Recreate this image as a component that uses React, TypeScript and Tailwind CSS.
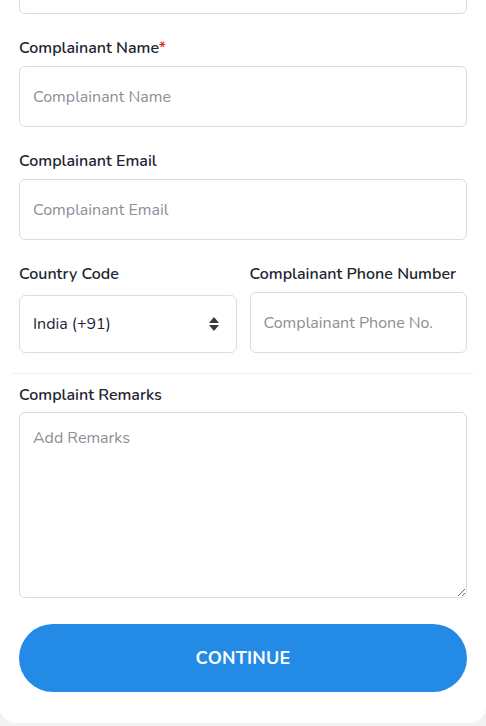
const font = { fontFamily: '"Nunito", "Open Sans", "Noto Sans", sans-serif' };

function Label({ children, required }: { children: React.ReactNode; required?: boolean }) {
  return (
    <label className="block text-[16px] font-semibold leading-5 text-[#1e2432]">
      {children}
      {required ? <span className="text-[#e0262f]">*</span> : null}
    </label>
  );
}

function TextInput({ placeholder }: { placeholder: string }) {
  return (
    <input
      placeholder={placeholder}
      className="h-[61px] w-full rounded-md border border-[#dcdcdc] bg-white px-[13px] text-[16px] text-[#1e2432] outline-none placeholder:text-[#8c8f96]"
      style={font}
    />
  );
}

export default function App() {
  return (
    <div className="h-[726px] overflow-hidden bg-[#f2f2f2]" style={font}>
      <div className="h-[723px] overflow-hidden rounded-b-2xl bg-white">
        <div className="-mt-[47px] px-[19px]">
          <TextInput placeholder="" />

          <div className="mt-[24px]">
            <Label required>Complainant Name</Label>
            <div className="mt-[8px]">
              <TextInput placeholder="Complainant Name" />
            </div>
          </div>

          <div className="mt-[24px]">
            <Label>Complainant Email</Label>
            <div className="mt-[8px]">
              <TextInput placeholder="Complainant Email" />
            </div>
          </div>

          <div className="mt-[24px] grid grid-cols-2 gap-[13px]">
            <div>
              <Label>Country Code</Label>
              <div className="mt-[11px] flex h-[58px] items-center justify-between rounded-md border border-[#dcdcdc] pl-[13px] pr-[17px]">
                <span className="text-[16px] text-[#1e2432]">India (+91)</span>
                <span className="flex flex-col items-center">
                  <svg width="10" height="6" viewBox="0 0 10 6">
                    <path d="M5 0 L10 6 L0 6 Z" fill="#3a3a3a" />
                  </svg>
                  <svg width="10" height="6" viewBox="0 0 10 6" className="mt-[2px]">
                    <path d="M0 0 L10 0 L5 6 Z" fill="#3a3a3a" />
                  </svg>
                </span>
              </div>
            </div>
            <div>
              <Label>Complainant Phone Number</Label>
              <div className="mt-[8px]">
                <TextInput placeholder="Complainant Phone No." />
              </div>
            </div>
          </div>
        </div>

        <div className="mx-[12px] mt-[20px] border-t border-[#edf1f6]" />

        <div className="px-[19px]">
          <div className="mt-[11px]">
            <Label>Complaint Remarks</Label>
            <textarea
              placeholder="Add Remarks"
              className="mt-[7px] block h-[186px] w-full resize-y rounded-md border border-[#dcdcdc] bg-white px-[13px] py-[15px] text-[16px] leading-5 text-[#1e2432] outline-none placeholder:text-[#8c8f96]"
              style={font}
            />
          </div>

          <button
            type="button"
            className="mt-[26px] flex h-[68px] w-full items-center justify-center rounded-full bg-[#238be6] text-[18px] font-bold tracking-[0.2px] text-white"
            style={font}
          >
            CONTINUE
          </button>
        </div>
      </div>
    </div>
  );
}
